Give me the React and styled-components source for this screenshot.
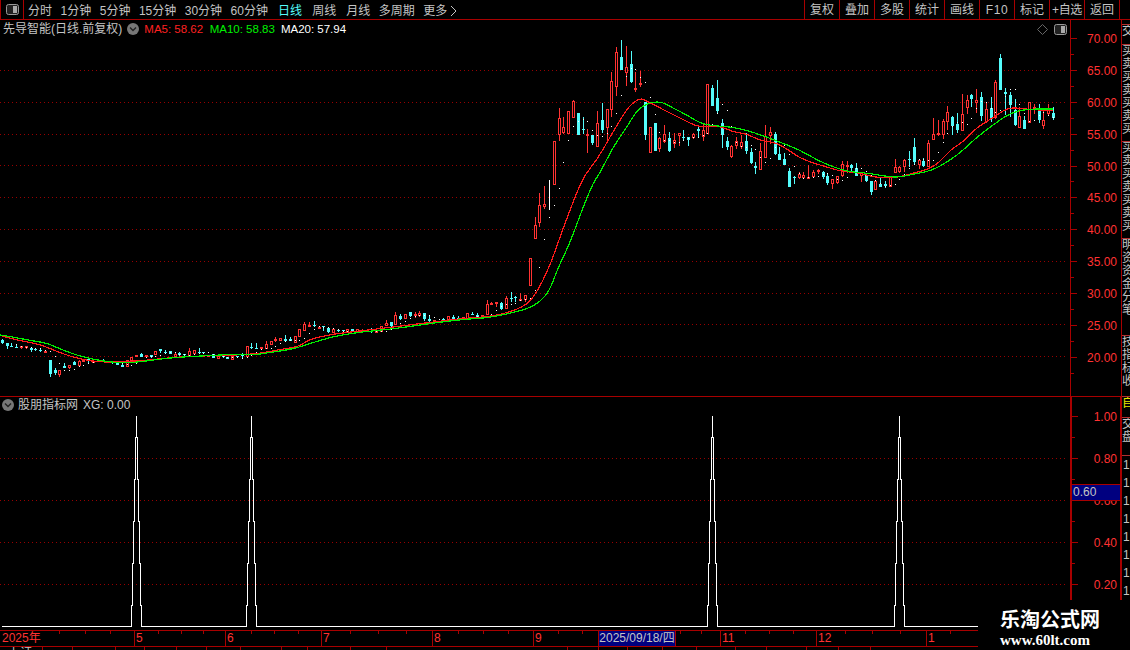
import React from "react";
import styled, { createGlobalStyle } from "styled-components";

const LINE = "#a80000";
const RED = "#ff3232";
const CYAN = "#54fcfc";
const GREY = "#c4c4c4";

// candle: [kind, wickTop, bodyTop, bodyBottom, wickBottom], in page pixels. kind 1 red, 0 cyan, 2 white doji
const CANDLES = [
  [0,339,340,343,344],[0,343,343,346,349],[0,343,346,347,347],[0,344,347,348,348],[1,346,346,348,349],
  [1,346,346,347,349],[0,348,348,350,352],[0,348,349,350,351],[0,349,350,351,352],[1,350,351,352,353],
  [0,360,360,374,377],[0,368,370,373,375],[1,370,370,375,377],[0,363,366,368,368],[1,365,365,368,369],
  [0,361,362,365,365],[1,360,361,366,366],[1,360,360,362,362],[0,358,359,361,363],[1,360,361,362,363],
  [1,360,360,361,361],[0,359,360,361,362],[0,361,361,362,363],[0,361,362,363,364],[0,362,363,365,365],
  [0,364,365,367,367],[1,360,360,367,367],[1,357,357,361,361],[1,355,355,357,357],[0,353,354,357,357],
  [1,355,355,357,358],[0,355,355,357,358],[1,351,351,355,355],[0,349,349,351,353],[0,350,352,353,353],
  [0,351,351,354,354],[1,353,354,357,357],[0,352,353,355,357],[0,354,354,355,357],[1,348,351,356,356],
  [1,350,350,354,354],[0,348,352,353,353],[0,352,352,353,354],[1,355,355,356,356],[0,354,354,358,358],
  [1,356,356,359,359],[0,355,355,357,358],[0,357,357,359,359],[1,356,356,360,360],[0,356,356,357,358],
  [0,353,355,356,358],[1,346,346,357,357],[0,343,347,348,349],[0,343,348,349,349],[1,347,347,349,349],
  [1,341,344,349,349],[1,341,341,345,345],[1,337,339,341,342],[1,338,338,341,341],[0,335,339,341,342],
  [0,337,339,341,341],[1,336,336,343,343],[1,329,329,337,337],[1,322,324,331,331],[1,322,325,327,327],
  [0,321,325,326,327],[1,327,327,329,329],[0,326,326,327,331],[0,327,328,332,333],[1,329,329,333,333],
  [0,329,330,331,332],[0,330,330,331,332],[1,329,329,333,333],[0,329,329,331,331],[1,329,329,333,333],
  [1,329,330,331,332],[1,330,330,331,331],[0,328,331,332,333],[1,331,331,333,333],[1,326,326,332,332],
  [1,320,323,326,326],[0,322,322,326,327],[1,312,315,325,325],[0,314,316,319,320],[1,314,314,319,319],
  [0,312,312,316,317],[1,312,314,316,318],[1,311,313,316,317],[0,313,313,319,321],[0,316,319,321,322],
  [1,320,320,321,321],[1,321,321,322,322],[0,318,319,320,322],[1,316,316,320,320],[0,315,317,319,320],
  [0,316,318,319,320],[1,317,317,319,319],[1,313,313,319,319],[0,312,314,315,315],[0,313,315,317,317],
  [1,315,315,318,318],[1,300,304,315,315],[1,302,303,305,305],[1,302,302,304,307],[0,302,303,309,310],
  [1,296,298,309,309],[0,292,298,299,302],[0,296,297,298,302],[1,293,299,301,301],[1,295,295,300,302],
  [1,258,258,286,286],[1,217,225,239,239],[1,193,205,223,227],[1,186,204,207,209],[2,180,180,210,210],
  [1,141,141,185,185],[1,108,118,135,141],[1,117,127,133,134],[1,111,111,134,134],[1,100,101,118,118],
  [0,113,113,135,135],[0,117,129,130,134],[1,129,134,136,153],[0,135,135,143,145],[1,111,123,147,147],
  [0,103,120,130,133],[1,109,109,128,143],[1,72,81,110,117],[1,47,52,87,96],[0,40,57,70,70],
  [1,46,67,73,86],[0,51,64,82,83],[1,72,88,89,92],[1,71,83,85,87],[0,102,102,135,140],
  [1,127,127,153,153],[0,123,123,151,151],[1,137,138,149,152],[1,125,134,142,143],[0,132,138,151,152],
  [1,133,140,144,148],[1,133,133,136,146],[0,130,137,138,140],[0,137,137,140,146],[1,133,134,138,139],
  [0,125,129,131,138],[1,123,130,137,141],[1,84,84,134,134],[0,85,88,106,106],[0,80,98,111,113],
  [0,119,123,135,148],[0,137,141,147,150],[1,145,146,157,158],[1,137,141,146,149],[1,135,142,147,149],
  [0,133,141,151,154],[0,148,152,163,164],[0,162,166,168,174],[1,143,151,170,170],[1,125,136,158,158],
  [1,127,132,136,144],[0,132,134,154,155],[0,147,154,160,160],[0,153,159,165,165],[0,168,171,187,187],
  [0,176,177,178,184],[1,172,174,178,179],[1,172,175,178,178],[1,165,177,178,178],[1,170,172,177,178],
  [1,169,170,172,174],[0,171,172,177,179],[0,173,176,183,185],[1,179,179,184,189],[1,176,176,183,184],
  [1,161,164,176,177],[1,161,165,167,173],[0,164,165,168,173],[0,163,168,176,176],[1,173,173,176,182],
  [0,174,175,181,182],[0,181,181,192,195],[1,181,181,190,190],[0,178,184,187,187],[0,181,184,186,188],
  [1,177,177,187,187],[1,159,167,173,173],[1,166,167,172,173],[1,159,160,167,172],[0,151,159,160,167],
  [0,138,147,162,165],[1,159,160,165,169],[0,158,161,166,167],[1,140,143,167,167],[1,118,134,140,140],
  [1,120,133,135,136],[1,119,121,135,139],[1,106,112,122,130],[0,116,117,126,135],[0,113,124,130,133],
  [1,94,114,131,131],[1,95,100,108,114],[0,94,95,99,107],[1,89,100,103,113],[0,92,97,116,121],
  [1,103,109,122,123],[0,97,108,118,122],[1,80,82,118,119],[0,54,58,90,90],[0,88,92,94,115],
  [0,92,95,105,117],[0,99,110,125,126],[1,107,116,128,128],[0,116,120,129,129],[1,102,102,123,123],
  [1,104,107,108,114],[0,104,110,120,123],[1,110,120,126,129],[1,104,110,114,115],[0,107,113,118,120],
];

const RED_LINE = "2,336 20,341 40,344 60,353 80,359 97,362 120,362 150,360 177,357 200,356 240,355 263,353 277,350 290,348 300,346 310,339 333,334 360,331 393,327 433,322 467,318 487,317 507,313 527,305 537,292 547,272 553,257 560,237 570,210 583,177 597,160 610,137 622,117 630,105 640,98 647,101 660,108 680,118 700,128 717,125 733,132 748,134 758,140 777,143 790,151 800,158 813,163 830,168 840,171 860,173 873,177 887,178 900,177 913,173 927,170 940,162 950,150 963,142 977,127 993,118 1007,108 1020,108 1033,110 1053,110";
const GREEN_LINE = "0,335 13,337 33,341 47,343 67,352 87,358 103,361 120,363 140,362 167,358 200,356 240,354 253,355 267,353 287,350 300,347 330,337 360,332 393,329 433,323 467,319 487,318 507,314 527,309 540,302 550,290 557,270 570,243 582,210 593,183 600,173 613,147 627,127 637,110 647,104 653,102 662,102 673,108 687,115 703,125 733,127 753,132 777,141 800,150 817,160 833,167 850,172 867,173 890,177 900,177 920,173 933,170 947,162 960,153 977,137 993,125 1010,113 1027,109 1053,109";

const PRICE_GRID = [70, 102, 134, 165, 197, 229, 261, 293, 324, 356];
const SIGNAL_GRID = [458, 500, 542, 584];
const SPIKES = [136, 251.5, 712, 899.5];
const DATE_TICKS = [59, 85, 110, 158, 181, 203, 251, 274, 298, 350, 378, 406, 458, 483, 508, 558, 582, 606, 680, 701, 745, 769, 793, 845, 872, 900, 950];

const NAV = [
  { label: "分时" }, { label: "1分钟" }, { label: "5分钟" }, { label: "15分钟" }, { label: "30分钟" }, { label: "60分钟" },
  { label: "日线", period: true, active: true }, { label: "周线", period: true }, { label: "月线", period: true },
  { label: "多周期" },
];
const TOOLS = ["复权", "叠加", "多股", "统计", "画线", "F10", "标记", "+自选", "返回"];
const PRICES = ["70.00", "65.00", "60.00", "55.00", "50.00", "45.00", "40.00", "35.00", "30.00", "25.00", "20.00"];
const SIGNALS = ["1.00", "0.80", "0.60", "0.40", "0.20"];
const DATES = [
  { w: 135, label: "2025年" }, { w: 91, label: "5" }, { w: 96, label: "6" }, { w: 111, label: "7" }, { w: 101, label: "8" },
  { w: 100, label: "9" }, { w: 87, label: "" }, { w: 96, label: "11" }, { w: 110, label: "12" }, { w: 203, label: "1" },
];
const RAIL_TABS = [
  { h: 5, text: "" }, { h: 20, text: "交" }, { h: 97, text: "买卖买卖买卖买" }, { h: 97, text: "买卖买卖买卖买" },
  { h: 97, text: "明资资金分笔" }, { h: 61, text: "技指标收" }, { h: 21, text: "自", yellow: true }, { h: 38, text: "交盘" },
];
const STATUS = [
  { w: 43, text: "上证" }, { w: 30, text: "一" }, { w: 43 }, { w: 29 }, { w: 32 }, { w: 30 }, { w: 34 }, { w: 41 }, { w: 26 }, { w: 43 }, { w: 36 },
  { w: 181 }, { w: 31 }, { w: 29 }, { w: 35 }, { w: 34 }, { w: 39 }, { w: 31 }, { w: 40 }, { w: 32 }, { w: 32 },
];

const GlobalStyle = createGlobalStyle`
  html, body {
    margin: 0;
    padding: 0;
    background: #000;
  }
`;

const Page = styled.div`
  position: relative;
  width: 1130px;
  height: 650px;
  overflow: hidden;
  background: #000;
  color: ${GREY};
  font: 12px/16px "Liberation Sans", "Noto Sans CJK SC", sans-serif;
`;

const Toolbar = styled.div`
  display: flex;
  justify-content: space-between;
  height: 20px;
  box-sizing: border-box;
  border-bottom: 1px solid ${LINE};
  padding-right: 10px;
`;

const NavGroup = styled.div`
  display: flex;
  align-items: center;
  gap: 8.5px;
`;

const ToggleBox = styled.div`
  display: flex;
  align-items: center;
  justify-content: center;
  width: 24px;
  height: 19px;
  box-sizing: border-box;
  border-left: 1px solid ${LINE};
  border-right: 1px solid ${LINE};
  margin-right: -4.5px;
`;

const NavItem = styled.span`
  color: ${(p) => (p.$active ? "#54fcfc" : GREY)};
  margin-left: ${(p) => (p.$period ? "1.6px" : "0")};
  padding-top: 2px;
  white-space: nowrap;
`;

const MoreItem = styled(NavItem)`
  display: flex;
  align-items: center;
  gap: 3px;
`;

const ToolGroup = styled.div`
  display: flex;
  border-right: 1px solid ${LINE};
`;

const ToolButton = styled.span`
  width: 35px;
  height: 19px;
  box-sizing: border-box;
  border-left: 1px solid ${LINE};
  text-align: center;
  line-height: 20px;
  white-space: nowrap;
  letter-spacing: ${(p) => p.$spacing}px;
`;

const Body = styled.div`
  display: flex;
  height: 610px;
`;

const Panels = styled.div`
  display: flex;
  flex-direction: column;
  width: 1122px;
`;

const PriceRow = styled.div`
  position: relative;
  display: flex;
  height: 377px;
  box-sizing: border-box;
  border-bottom: 1px solid ${LINE};
`;

const SignalRow = styled.div`
  position: relative;
  display: flex;
  height: 233px;
  overflow: hidden;
`;

const Plot = styled.svg`
  display: block;
  width: 1070px;
  flex: none;
  height: ${(p) => p.$h}px;
  shape-rendering: crispEdges;
`;

const GridDots = styled.path`
  fill: #980000;
`;

const Wick = styled.line`
  stroke: ${(p) => p.$color};
  stroke-width: 1;
`;

const HollowBody = styled.rect`
  fill: #000;
  stroke: ${RED};
  stroke-width: 1;
`;

const SolidBody = styled.rect`
  fill: ${CYAN};
`;

const Dot = styled.rect`
  fill: #fff;
`;

const MaLine = styled.path`
  fill: none;
  stroke: ${(p) => p.$color};
  stroke-width: 1.2;
`;

const SpikeLine = styled.polyline`
  fill: none;
  stroke: #fff;
  stroke-width: 1;
`;

const Legend = styled.div`
  position: absolute;
  display: flex;
  align-items: center;
  left: ${(p) => p.$left}px;
  top: ${(p) => p.$top}px;
  height: 16px;
  white-space: nowrap;
`;

const LegendName = styled.span`
  margin-right: 5px;
`;

const LegendValue = styled.span`
  margin-left: ${(p) => p.$gap || 0}px;
  color: ${(p) => p.$color};
`;

const MaValue = styled(LegendValue)`
  font-size: 11.5px;
`;

const PlotIcons = styled.div`
  position: absolute;
  top: 4px;
  left: 1037px;
  display: flex;
  align-items: center;
  gap: 6px;
`;

const Axis = styled.div`
  position: relative;
  width: 52px;
  flex: none;
  box-sizing: border-box;
  border-left: ${(p) => p.$border}px solid ${LINE};
  border-right: ${(p) => p.$border}px solid ${LINE};
  padding-top: ${(p) => p.$top}px;

  & > :first-child {
    margin-top: ${(p) => p.$shift || 0}px;
  }
`;

const AxisRow = styled.div`
  position: relative;
  display: flex;
  align-items: center;
  justify-content: flex-end;
  height: ${(p) => p.$h}px;
  box-sizing: border-box;
  padding: 2px ${(p) => p.$pad}px 0 0;
  color: ${RED};

  &::before {
    content: "";
    position: absolute;
    left: 0;
    top: 50%;
    width: 6px;
    height: 1px;
    background: ${LINE};
  }

  &::after {
    content: "";
    position: absolute;
    left: 0;
    top: 100%;
    width: 3px;
    height: 1px;
    background: ${LINE};
  }
`;

const CursorValue = styled.div`
  position: absolute;
  left: 0;
  right: 0;
  top: 87px;
  height: 17px;
  box-sizing: border-box;
  border: 1px solid ${LINE};
  border-left: 0;
  border-right: 0;
  background: #000080;
  color: ${GREY};
  line-height: 15px;
  padding-left: 1px;
`;

const Rail = styled.div`
  display: flex;
  flex-direction: column;
  width: 8px;
  overflow: hidden;
`;

const RailTab = styled.div`
  flex: none;
  height: ${(p) => p.$h}px;
  box-sizing: border-box;
  border-bottom: 1px solid #b03030;
  overflow: hidden;
  color: ${(p) => (p.$yellow ? "#e8e800" : GREY)};
  line-height: 13px;
  width: 12px;
  word-break: break-all;
`;

const RailDigit = styled.div`
  flex: none;
  height: 18px;
  line-height: 18px;
  padding-left: 1px;
  color: ${GREY};
`;

const DateAxis = styled.div`
  position: relative;
  display: flex;
  height: 17px;
  box-sizing: border-box;
  border-top: 1px solid ${LINE};
  border-bottom: 1px solid ${LINE};
  color: ${RED};
  line-height: 15px;
`;

const DateCell = styled.div`
  width: ${(p) => p.$w}px;
  flex: none;
  box-sizing: border-box;
  border-right: 1px solid ${LINE};
  padding-left: ${(p) => (p.$first ? 2 : 1)}px;
`;

const DateTicks = styled.svg`
  position: absolute;
  left: 0;
  top: 0;
  width: 1130px;
  height: 3px;
  shape-rendering: crispEdges;
`;

const CursorDate = styled.div`
  position: absolute;
  left: 598px;
  top: 0;
  width: 78px;
  height: 15px;
  box-sizing: border-box;
  border: 1px solid ${LINE};
  border-top: 0;
  border-bottom: 0;
  background: #000080;
  color: ${GREY};
  text-align: center;
  white-space: nowrap;
`;

const StatusBar = styled.div`
  display: flex;
  height: 3px;
  overflow: hidden;
`;

const StatusCell = styled.div`
  width: ${(p) => p.$w}px;
  flex: none;
  box-sizing: border-box;
  border-right: 1px solid ${LINE};
  padding-left: 8px;
  line-height: 12px;
  white-space: nowrap;
`;

const Watermark = styled.div`
  position: absolute;
  right: 0;
  bottom: 0;
  width: 152px;
  height: 50px;
  box-sizing: border-box;
  padding: 7px 0 0 22px;
  background: #000;
  color: #fff;
`;

const WatermarkTitle = styled.div`
  font: bold 20px/24px "Noto Sans CJK SC", sans-serif;
  white-space: nowrap;
`;

const WatermarkUrl = styled.div`
  font: bold 15px/18px "Liberation Serif", serif;
  white-space: nowrap;
`;

const ToggleIcon = () => (
  <svg width="13" height="11" viewBox="0 0 13 11">
    <rect x="0.5" y="0.5" width="12" height="10" rx="2" fill="#222" stroke="#999" />
    <rect x="7" y="2" width="4" height="7" fill="#aaa" />
  </svg>
);

const DiamondIcon = () => (
  <svg width="11" height="11" viewBox="0 0 11 11">
    <path d="M5.5 0.5 L10.5 5.5 L5.5 10.5 L0.5 5.5 Z" fill="none" stroke="#666" />
  </svg>
);

const MenuDot = () => (
  <svg width="12" height="12" viewBox="0 0 12 12">
    <circle cx="6" cy="6" r="6" fill="#777" />
    <path d="M3 4.5 L6 7.5 L9 4.5" fill="none" stroke="#222" strokeWidth="1.4" />
  </svg>
);

const candleX = (i) => Math.floor(2.3 + 4.8 * i);

const Candle = ({ i, data }) => {
  const [kind, wickTop, top, bottom, wickBottom] = data;
  const x = candleX(i);
  if (kind === 2) {
    return <Wick $color="#fff" x1={x + 0.5} x2={x + 0.5} y1={wickTop} y2={wickBottom} />;
  }
  if (kind === 0) {
    return (
      <g>
        <Wick $color={CYAN} x1={x + 0.5} x2={x + 0.5} y1={wickTop} y2={wickBottom} />
        <SolidBody x={x - 1} y={top} width="3" height={Math.max(bottom - top, 1)} />
      </g>
    );
  }
  return (
    <g>
      <Wick $color={RED} x1={x + 0.5} x2={x + 0.5} y1={wickTop} y2={wickBottom} />
      <HollowBody x={x - 0.5} y={top + 0.5} width="2" height={Math.max(bottom - top - 1, 1)} />
    </g>
  );
};

// small white dots: roughly a 3 day average of the body middles
const dotY = (i) => {
  let sum = 0;
  for (let k = i - 3; k < i; k++) sum += (CANDLES[k][2] + CANDLES[k][3]) / 2;
  return Math.round(sum / 3);
};

// round the hand-read points off through their midpoints
const smooth = (points) => {
  const pts = points.split(" ").map((p) => p.split(",").map(Number));
  let d = `M${pts[0][0]} ${pts[0][1]}`;
  for (let i = 1; i < pts.length - 1; i++) {
    const mx = (pts[i][0] + pts[i + 1][0]) / 2;
    const my = (pts[i][1] + pts[i + 1][1]) / 2;
    d += ` Q${pts[i][0]} ${pts[i][1]} ${mx} ${my}`;
  }
  const last = pts[pts.length - 1];
  return `${d} L${last[0]} ${last[1]}`;
};

// one pixel every 4px along each grid row
const gridDots = (rows) =>
  rows
    .map((y) => {
      let d = "";
      for (let x = 0; x < 1067; x += 4) d += `M${x} ${y}h1v1h-1z`;
      return d;
    })
    .join("");

// each spike moves one pixel sideways every 42px of height
const spikePoints = () => {
  const pts = ["2,626.5"];
  SPIKES.forEach((c) => {
    let x = Math.floor(c) - 4.5;
    pts.push(`${x},626.5`);
    [605, 563, 521, 479, 437].forEach((y) => {
      pts.push(`${x},${y}`);
      x += 1;
      pts.push(`${x},${y}`);
    });
    pts.push(`${x},416`, `${x},437`);
    [437, 479, 521, 563, 605].forEach((y) => {
      pts.push(`${x},${y}`);
      x += 1;
      pts.push(`${x},${y}`);
    });
    pts.push(`${x},626.5`);
  });
  pts.push("1068,626.5");
  return pts.join(" ");
};

const App = () => (
  <Page>
    <GlobalStyle />
    <Toolbar>
      <NavGroup>
        <ToggleBox>
          <ToggleIcon />
        </ToggleBox>
        {NAV.map((n) => (
          <NavItem key={n.label} $period={n.period} $active={n.active}>
            {n.label}
          </NavItem>
        ))}
        <MoreItem>
          更多
          <svg width="7" height="12" viewBox="0 0 7 12">
            <path d="M1 1 L6 6 L1 11" fill="none" stroke={GREY} />
          </svg>
        </MoreItem>
      </NavGroup>
      <ToolGroup>
        {TOOLS.map((t) => (
          <ToolButton key={t} $spacing={t === "F10" ? 0.6 : t === "+自选" ? -0.3 : 0}>
            {t}
          </ToolButton>
        ))}
      </ToolGroup>
    </Toolbar>

    <Body>
      <Panels>
        <PriceRow>
          <Plot $h={376} viewBox="0 20 1070 376">
            <GridDots d={gridDots(PRICE_GRID)} />
            {CANDLES.map((c, i) => (
              <Candle key={i} i={i} data={c} />
            ))}
            {CANDLES.map((c, i) => (i > 2 ? <Dot key={i} x={candleX(i)} y={dotY(i)} width="1" height="1" /> : null))}
            <MaLine $color="#ff1a1a" d={smooth(RED_LINE)} />
            <MaLine $color="#00ee00" d={smooth(GREEN_LINE)} />
          </Plot>
          <Legend $left={3} $top={1}>
            <LegendName>先导智能(日线.前复权)</LegendName>
            <MenuDot />
            <MaValue $gap={5} $color="#ff2020">MA5: 58.62</MaValue>
            <MaValue $gap={6.5} $color="#00f000">MA10: 58.83</MaValue>
            <MaValue $gap={6} $color="#ffffff">MA20: 57.94</MaValue>
          </Legend>
          <PlotIcons>
            <DiamondIcon />
            <ToggleIcon />
          </PlotIcons>
          <Axis $border={1} $top={2}>
            {PRICES.map((p) => (
              <AxisRow key={p} $h={31.9} $pad={4}>
                {p}
              </AxisRow>
            ))}
          </Axis>
        </PriceRow>

        <SignalRow>
          <Plot $h={233} viewBox="0 397 1070 233">
            <GridDots d={gridDots(SIGNAL_GRID)} />
            <SpikeLine points={spikePoints()} />
          </Plot>
          <Legend $left={2} $top={0}>
            <MenuDot />
            <LegendValue $gap={4} $color={GREY}>股朋指标网</LegendValue>
            <LegendValue $gap={5} $color={GREY}>XG: 0.00</LegendValue>
          </Legend>
          <Axis $border={2} $top={0} $shift={-2}>
            {SIGNALS.map((s) => (
              <AxisRow key={s} $h={42} $pad={3}>
                {s}
              </AxisRow>
            ))}
            <CursorValue>0.60</CursorValue>
          </Axis>
        </SignalRow>
      </Panels>

      <Rail>
        {RAIL_TABS.map((t, i) => (
          <RailTab key={i} $h={t.h} $yellow={t.yellow}>
            {t.text}
          </RailTab>
        ))}
        {[0, 1, 2, 3, 4, 5, 6, 7, 8].map((n) => (
          <RailDigit key={n}>1</RailDigit>
        ))}
      </Rail>
    </Body>

    <DateAxis>
      {DATES.map((d, i) => (
        <DateCell key={i} $w={d.w} $first={i === 0}>
          {d.label}
        </DateCell>
      ))}
      <DateTicks viewBox="0 0 1130 3">
        {DATE_TICKS.map((x) => (
          <Wick key={x} $color={LINE} x1={x + 0.5} x2={x + 0.5} y1="0" y2="3" />
        ))}
      </DateTicks>
      <CursorDate>2025/09/18/四</CursorDate>
    </DateAxis>

    <StatusBar>
      {STATUS.map((s, i) => (
        <StatusCell key={i} $w={s.w}>
          {s.text}
        </StatusCell>
      ))}
    </StatusBar>

    <Watermark>
      <WatermarkTitle>乐淘公式网</WatermarkTitle>
      <WatermarkUrl>www.60lt.com</WatermarkUrl>
    </Watermark>
  </Page>
);

export default App;
